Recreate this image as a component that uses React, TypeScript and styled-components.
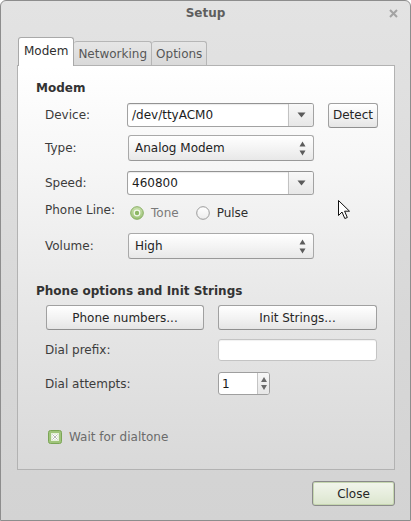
import styled, { createGlobalStyle } from 'styled-components';

const GlobalStyle = createGlobalStyle`
  html, body { margin: 0; padding: 0; background: #ffffff; }
  body {
    font-family: 'DejaVu Sans', 'Liberation Sans', sans-serif;
    font-size: 12px;
    color: #3a3a3a;
  }
  * { box-sizing: border-box; }
`;

const Window = styled.div`
  position: relative;
  width: 411px;
  height: 521px;
  border: 1px solid #8d8d8d;
  border-radius: 6px 6px 0 0;
  background: linear-gradient(180deg, #e3e3e3 0%, #d8d8d8 60%, #d3d3d3 100%);
  display: flex;
  flex-direction: column;
  overflow: hidden;
`;

const TitleBar = styled.div`
  height: 24px;
  display: grid;
  grid-template-columns: 1fr auto 1fr;
  align-items: center;
  font-weight: bold;
  color: #5e5e5e;
`;

const Title = styled.div`
  grid-column: 2;
`;

const TitleClose = styled.div`
  grid-column: 3;
  justify-self: end;
  margin-right: 12px;
  display: flex;
`;

const Body = styled.div`
  padding: 12px 15px 0 16px;
  display: flex;
  flex-direction: column;
`;

const TabStrip = styled.div`
  display: flex;
  align-items: flex-end;
  height: 28px;
  padding-left: 1px;
`;

const Tab = styled.div<{ $active?: boolean }>`
  position: relative;
  z-index: ${({ $active }) => ($active ? 2 : 1)};
  height: ${({ $active }) => ($active ? '29px' : '24px')};
  margin-bottom: ${({ $active }) => ($active ? '-1px' : '0')};
  padding: ${({ $active }) => ($active ? '0 5px 3px 5px' : '0 4px')};
  display: flex;
  align-items: center;
  border: 1px solid ${({ $active }) => ($active ? '#a9a9a9' : '#b6b6b6')};
  border-bottom: none;
  border-left: ${({ $active }) => ($active ? '1px solid #a9a9a9' : 'none')};
  border-radius: 3px 3px 0 0;
  background: ${({ $active }) =>
    $active ? '#ffffff' : 'linear-gradient(180deg, #e6e6e6 0%, #d9d9d9 100%)'};
  color: ${({ $active }) => ($active ? '#2e2e2e' : '#575757')};
`;

const Panel = styled.div`
  position: relative;
  height: 405px;
  border: 1px solid #b2b2b2;
  background: linear-gradient(180deg, #ffffff 0%, #f6f6f6 25%, #e5e5e5 65%, #d9d9d9 100%);
  padding: 0 0 0 18px;
  display: flex;
  flex-direction: column;
`;

const SectionTitle = styled.div<{ $mt: number }>`
  margin-top: ${({ $mt }) => $mt}px;
  height: 16px;
  line-height: 16px;
  font-weight: bold;
  color: #333333;
`;

const FormRow = styled.div<{ $mt: number; $h: number; $top?: boolean }>`
  margin-top: ${({ $mt }) => $mt}px;
  height: ${({ $h }) => $h}px;
  padding-left: 9px;
  display: flex;
  align-items: ${({ $top }) => ($top ? 'flex-start' : 'center')};
`;

const Label = styled.div<{ $w: number }>`
  width: ${({ $w }) => $w}px;
  flex: none;
  color: #3c3c3c;
  line-height: 18px;
`;

const ComboEntry = styled.div`
  width: 187px;
  height: 24px;
  display: flex;
  border: 1px solid #a2a2a2;
  border-top-color: #939393;
  border-radius: 3px;
  background: #ffffff;
  overflow: hidden;
`;

const EntryText = styled.div`
  flex: 1;
  padding-left: 4px;
  display: flex;
  align-items: center;
  color: #1c1c1c;
  box-shadow: inset 0 1px 1px rgba(0, 0, 0, 0.08);
`;

const ArrowButton = styled.div`
  width: 25px;
  flex: none;
  border-left: 1px solid #c2c2c2;
  background: linear-gradient(180deg, #f8f8f8 0%, #e7e7e7 100%);
  display: flex;
  align-items: center;
  justify-content: center;
`;

const ComboBox = styled.div`
  width: 186px;
  height: 26px;
  margin-left: 1px;
  padding: 0 7px 0 6px;
  display: flex;
  align-items: center;
  justify-content: space-between;
  border: 1px solid #a9a9a9;
  border-bottom-color: #999999;
  border-radius: 3px;
  background: linear-gradient(180deg, #ffffff 0%, #f3f3f3 55%, #e8e8e8 100%);
  color: #232323;
`;

const Button = styled.div<{ $w: number; $h: number; $ml?: number }>`
  width: ${({ $w }) => $w}px;
  height: ${({ $h }) => $h}px;
  margin-left: ${({ $ml }) => $ml ?? 0}px;
  display: flex;
  align-items: center;
  justify-content: center;
  border: 1px solid #a0a0a0;
  border-bottom-color: #8f8f8f;
  border-radius: 3px;
  background: linear-gradient(180deg, #ffffff 0%, #f2f2f2 55%, #e5e5e5 100%);
  color: #262626;
`;

const RadioGroup = styled.div`
  margin-top: 5px;
  margin-left: 3px;
  display: flex;
  align-items: center;
`;

const RadioItem = styled.div<{ $dim?: boolean; $ml?: number }>`
  display: flex;
  align-items: center;
  gap: 7px;
  margin-left: ${({ $ml }) => $ml ?? 0}px;
  color: ${({ $dim }) => ($dim ? '#7a7a7a' : '#2e2e2e')};
`;

const Entry = styled.div<{ $w: number; $soft?: boolean }>`
  width: ${({ $w }) => $w}px;
  height: 22px;
  border: 1px solid ${({ $soft }) => ($soft ? '#c4c4c4' : '#a2a2a2')};
  border-radius: 3px;
  background: #ffffff;
  box-shadow: inset 0 1px 1px rgba(0, 0, 0, 0.06);
`;

const Spin = styled.div`
  width: 52px;
  height: 23px;
  display: flex;
  border: 1px solid #9f9f9f;
  border-radius: 3px;
  background: #ffffff;
  overflow: hidden;
`;

const SpinText = styled.div`
  flex: 1;
  padding-left: 3px;
  display: flex;
  align-items: center;
  color: #1a1a1a;
`;

const SpinButtons = styled.div`
  width: 12px;
  flex: none;
  border-left: 1px solid #c4c4c4;
  background: linear-gradient(180deg, #f7f7f7 0%, #e6e6e6 100%);
  display: flex;
  flex-direction: column;
  align-items: center;
  justify-content: center;
  gap: 3px;
`;

const CheckRow = styled.div`
  margin-top: 34px;
  padding-left: 12px;
  height: 16px;
  display: flex;
  align-items: center;
  gap: 7px;
  color: #6b6b6b;
`;

const Cursor = styled.div`
  position: absolute;
  left: 320px;
  top: 134px;
  display: flex;
`;

const ActionArea = styled.div`
  margin-top: 11px;
  display: flex;
  justify-content: flex-end;
`;

const CloseButton = styled.div`
  width: 83px;
  height: 25px;
  display: flex;
  align-items: center;
  justify-content: center;
  border: 1px solid #8a8a8a;
  border-radius: 3px;
  background: linear-gradient(180deg, #f2f5ec 0%, #e6eddc 55%, #dbe5cd 100%);
  box-shadow: inset 0 0 0 1px #c6d7b0;
  color: #262626;
`;

const DownArrow = () => (
  <svg width="9" height="6" viewBox="0 0 9 6">
    <path d="M0.5 0.5 L8.5 0.5 L4.5 5.5 Z" fill="#5a5a5a" />
  </svg>
);

const UpDown = () => (
  <svg width="7" height="15" viewBox="0 0 7 15">
    <path d="M0.5 5.5 L6.5 5.5 L3.5 0.5 Z" fill="#5c5c5c" />
    <path d="M0.5 9.5 L6.5 9.5 L3.5 14.5 Z" fill="#5c5c5c" />
  </svg>
);

const RadioOn = () => (
  <svg width="14" height="14" viewBox="0 0 14 14">
    <defs>
      <linearGradient id="rg" x1="0" y1="0" x2="0" y2="1">
        <stop offset="0" stopColor="#c9e0ad" />
        <stop offset="1" stopColor="#9dc377" />
      </linearGradient>
    </defs>
    <circle cx="7" cy="7" r="6.3" fill="url(#rg)" stroke="#86ad60" strokeWidth="1" />
    <circle cx="7" cy="7" r="3.4" fill="#f4f8ee" />
    <circle cx="7" cy="7" r="2.2" fill="#8db865" />
  </svg>
);

const RadioOff = () => (
  <svg width="14" height="14" viewBox="0 0 14 14">
    <defs>
      <linearGradient id="ro" x1="0" y1="0" x2="0" y2="1">
        <stop offset="0" stopColor="#ffffff" />
        <stop offset="1" stopColor="#ececec" />
      </linearGradient>
    </defs>
    <circle cx="7" cy="7" r="6.3" fill="url(#ro)" stroke="#9a9a9a" strokeWidth="1" />
  </svg>
);

const CheckBox = () => (
  <svg width="14" height="14" viewBox="0 0 14 14">
    <rect x="0.5" y="0.5" width="13" height="13" rx="2" fill="#9fc47a" stroke="#7ba556" />
    <rect x="3" y="3" width="8" height="8" fill="#e4efd8" />
    <path d="M4.5 4.5 L9.5 9.5 M9.5 4.5 L4.5 9.5" stroke="#ffffff" strokeWidth="2" />
    <path d="M4.5 4.5 L9.5 9.5 M9.5 4.5 L4.5 9.5" stroke="#8a8a8a" strokeWidth="0.6" />
  </svg>
);

const Pointer = () => (
  <svg width="13" height="20" viewBox="0 0 13 20">
    <path
      d="M0.5 0.5 L0.5 15.5 L4 12 L6.8 18.5 L9.3 17.5 L6.6 11.2 L11.5 11.2 Z"
      fill="#ffffff"
      stroke="#111111"
      strokeWidth="1"
      strokeLinejoin="round"
    />
  </svg>
);

const TitleX = () => (
  <svg width="9" height="9" viewBox="0 0 9 9">
    <path d="M1 1 L8 8 M8 1 L1 8" stroke="#a3a3a3" strokeWidth="2" />
  </svg>
);

export default function App() {
  return (
    <>
      <GlobalStyle />
      <Window>
        <TitleBar>
          <Title>Setup</Title>
          <TitleClose>
            <TitleX />
          </TitleClose>
        </TitleBar>
        <Body>
          <TabStrip>
            <Tab $active>Modem</Tab>
            <Tab>Networking</Tab>
            <Tab>Options</Tab>
          </TabStrip>
          <Panel>
            <SectionTitle $mt={14}>Modem</SectionTitle>
            <FormRow $mt={6} $h={26}>
              <Label $w={82}>Device:</Label>
              <ComboEntry>
                <EntryText>/dev/ttyACM0</EntryText>
                <ArrowButton>
                  <DownArrow />
                </ArrowButton>
              </ComboEntry>
              <Button $w={50} $h={25} $ml={14}>
                Detect
              </Button>
            </FormRow>
            <FormRow $mt={7} $h={26}>
              <Label $w={82}>Type:</Label>
              <ComboBox>
                <span>Analog Modem</span>
                <UpDown />
              </ComboBox>
            </FormRow>
            <FormRow $mt={9} $h={26}>
              <Label $w={82}>Speed:</Label>
              <ComboEntry>
                <EntryText>460800</EntryText>
                <ArrowButton>
                  <DownArrow />
                </ArrowButton>
              </ComboEntry>
            </FormRow>
            <FormRow $mt={5} $h={24} $top>
              <Label $w={82}>Phone Line:</Label>
              <RadioGroup>
                <RadioItem $dim>
                  <RadioOn />
                  Tone
                </RadioItem>
                <RadioItem $ml={17}>
                  <RadioOff />
                  Pulse
                </RadioItem>
              </RadioGroup>
            </FormRow>
            <FormRow $mt={8} $h={26}>
              <Label $w={82}>Volume:</Label>
              <ComboBox>
                <span>High</span>
                <UpDown />
              </ComboBox>
            </FormRow>

            <SectionTitle $mt={24}>Phone options and Init Strings</SectionTitle>
            <FormRow $mt={6} $h={25}>
              <Button $w={158} $h={25} $ml={1}>
                Phone numbers...
              </Button>
              <Button $w={159} $h={25} $ml={14}>
                Init Strings...
              </Button>
            </FormRow>
            <FormRow $mt={9} $h={22}>
              <Label $w={173}>Dial prefix:</Label>
              <Entry $w={159} $soft />
            </FormRow>
            <FormRow $mt={11} $h={23}>
              <Label $w={173}>Dial attempts:</Label>
              <Spin>
                <SpinText>1</SpinText>
                <SpinButtons>
                  <svg width="6" height="5" viewBox="0 0 6 5">
                    <path d="M0 5 L6 5 L3 0 Z" fill="#6a6a6a" />
                  </svg>
                  <svg width="6" height="5" viewBox="0 0 6 5">
                    <path d="M0 0 L6 0 L3 5 Z" fill="#6a6a6a" />
                  </svg>
                </SpinButtons>
              </Spin>
            </FormRow>

            <CheckRow>
              <CheckBox />
              Wait for dialtone
            </CheckRow>

            <Cursor>
              <Pointer />
            </Cursor>
          </Panel>
          <ActionArea>
            <CloseButton>Close</CloseButton>
          </ActionArea>
        </Body>
      </Window>
    </>
  );
}
